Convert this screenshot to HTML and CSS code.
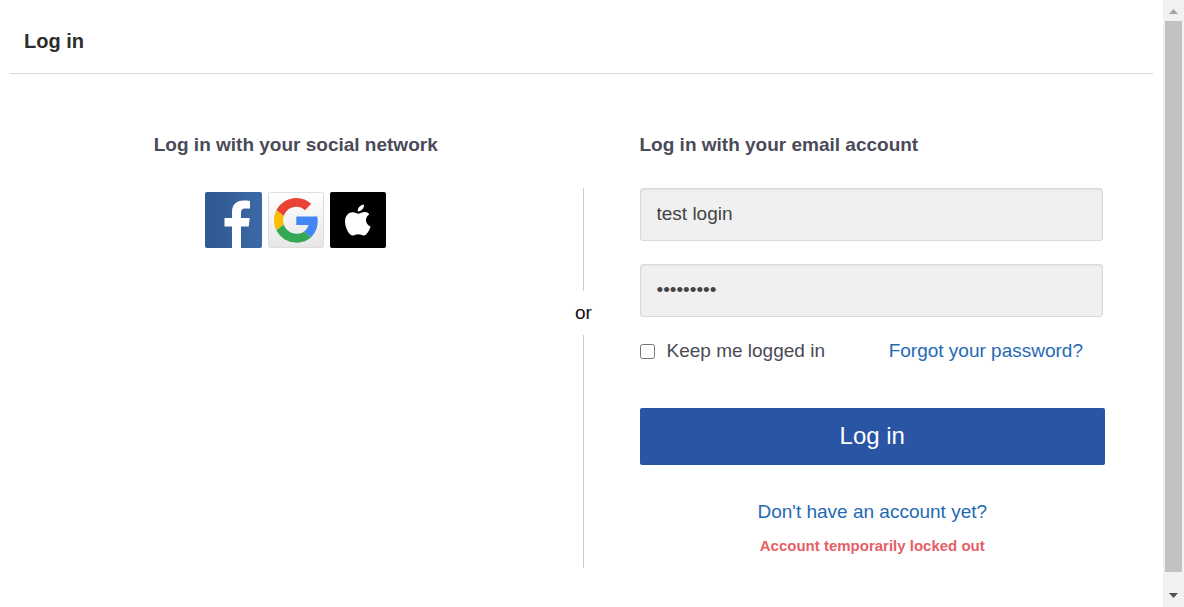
FILE: index.html
```html
<!DOCTYPE html>
<html lang="en">
<head>
<meta charset="utf-8">
<title>Log in</title>
<link rel="stylesheet" href="styles.css">
</head>
<body>
<div class="page">
  <header class="header"><h1 class="title">Log in</h1></header>
  <main class="columns">
    <section class="social">
      <h2 class="heading">Log in with your social network</h2>
      <div class="providers">
        <button class="provider" type="button" aria-label="Facebook">
          <svg width="57" height="56" viewBox="0 0 57 56">
            <defs><linearGradient id="fb" x1="0" x2="1"><stop offset="0" stop-color="#305891"/><stop offset="1" stop-color="#3c69a6"/></linearGradient></defs>
            <rect width="57" height="56" rx="2" fill="url(#fb)"/>
            <path fill="#fff" d="M27 56V34.500h-7.500V26H27v-6c0-7.500 4.500-11.500 11.500-11.500 2.500 0 4.800.1 6.500.400v7.600h-4.500c-3.500 0-4.500 1.700-4.500 4.500v5h8.700l-1 8.500H36V56z"/>
          </svg>
        </button>
        <button class="provider" type="button" aria-label="Google">
          <svg width="56" height="56" viewBox="0 0 56 56">
            <defs><linearGradient id="gg" x1="0" x2="0" y1="0" y2="1"><stop offset="0" stop-color="#fff"/><stop offset="1" stop-color="#e6e6e6"/></linearGradient></defs>
            <rect x=".5" y=".5" width="55" height="55" rx="2" fill="url(#gg)" stroke="#dedede"/>
            <g transform="translate(6 6) scale(.93)">
              <path fill="#ea4335" d="M24 9.500c3.540 0 6.710 1.220 9.210 3.600l6.850-6.850C35.900 2.380 30.470 0 24 0 14.620 0 6.510 5.380 2.560 13.220l7.980 6.190C12.430 13.720 17.740 9.500 24 9.500z"/>
              <path fill="#4285f4" d="M46.980 24.550c0-1.570-.15-3.090-.38-4.550H24v9.020h12.940c-.58 2.960-2.260 5.480-4.780 7.180l7.730 6c4.510-4.180 7.090-10.360 7.090-17.650z"/>
              <path fill="#fbbc05" d="M10.530 28.590c-.48-1.450-.76-2.990-.76-4.590s.27-3.140.76-4.590l-7.980-6.190C.92 16.460 0 20.120 0 24c0 3.880.92 7.540 2.560 10.780l7.970-6.190z"/>
              <path fill="#34a853" d="M24 48c6.480 0 11.930-2.130 15.890-5.810l-7.730-6c-2.150 1.450-4.920 2.300-8.160 2.300-6.260 0-11.570-4.220-13.470-9.910l-7.980 6.190C6.510 42.620 14.620 48 24 48z"/>
            </g>
          </svg>
        </button>
        <button class="provider" type="button" aria-label="Apple">
          <svg width="56" height="56" viewBox="0 0 56 56">
            <rect width="56" height="56" rx="2"/>
            <path fill="#fff" d="M34 12.500c.3 3.800-3 7.100-6.200 7-.5-3.400 2.700-6.700 6.200-7zM39.200 22.400c-4.700 2.900-4.300 9.500 1.400 12-1 3.300-3.800 9.100-7 9.100-2 0-2.800-1.200-5.300-1.200s-3.400 1.200-5.300 1.200c-4 0-8-8.100-8-14 0-6 3.700-9.300 7.700-9.300 2.500 0 4.400 1.500 5.800 1.500 1.500 0 3.700-1.600 6.500-1.600 1.700 0 3.300.8 4.200 2.300z"/>
          </svg>
        </button>
      </div>
    </section>
    <div class="divider"><span class="rule rule-top"></span><span class="or">or</span><span class="rule"></span></div>
    <section class="account">
      <h2 class="heading">Log in with your email account</h2>
      <form class="form">
        <input class="field" type="text" aria-label="Username" value="test login">
        <input class="field" type="password" aria-label="Password" value="password1">
        <div class="options">
          <label class="keep" for="keep"><input class="check" id="keep" type="checkbox">Keep me logged in</label>
          <a class="link" href="#">Forgot your password?</a>
        </div>
        <button class="submit" type="submit">Log in</button>
        <a class="link signup" href="#">Don't have an account yet?</a>
        <p class="error">Account temporarily locked out</p>
      </form>
    </section>
  </main>
</div>
<div class="scrollbar" aria-hidden="true">
  <svg class="arrow" width="21" height="21"><path fill="#a3a3a3" d="M6 14l4.500-5 4.500 5z"/></svg>
  <div class="thumb"></div>
  <svg class="arrow" width="21" height="21"><path fill="#505050" d="M6 7h9l-4.500 5z"/></svg>
</div>
</body>
</html>
```
FILE: styles.css
```css
* { box-sizing: border-box; }
body {
  display: flex;
  min-height: 100vh;
  margin: 0;
  background: #fff;
  font: 19px/24px "Liberation Sans", Arial, sans-serif;
  color: #4a4a55;
}
.page { flex: 1; padding: 0 10px; }
.header { padding: 29px 14px 19px; border-bottom: 1px solid #d9dbdb; }
.title { margin: 0; font-size: 20px; line-height: 25px; color: #2d2d2d; }
.columns { display: grid; grid-template-columns: 1fr 24px 1fr; padding: 59px 0 0 4px; }
.heading { margin: 0; font-size: 19px; line-height: 24px; color: #4a4a58; }
.social { display: flex; flex-direction: column; align-items: center; gap: 35px; padding-left: 6px; }
.providers { display: flex; gap: 6px; }
.provider { display: block; padding: 0; border: 0; background: none; cursor: pointer; }
.provider svg { display: block; }
.divider { display: flex; flex-direction: column; align-items: center; padding-top: 55px; color: #111; }
.rule { flex: 1; width: 1px; background: #ccc; }
.rule-top { flex: none; height: 103px; }
.or { line-height: 44px; }
.account { padding: 0 48px 12px 44px; }
.form { display: flex; flex-direction: column; padding-top: 31px; }
.field {
  height: 53px;
  margin: 0 2px 23px 0;
  padding: 0 16px 2px;
  border: 1px solid #d9d9d9;
  border-radius: 3px;
  background: #f0f0f0;
  box-shadow: inset 0 1px 2px rgba(0, 0, 0, .06);
  font: inherit;
  color: #444;
}
.options { display: flex; justify-content: space-between; margin-top: -1px; padding-right: 22px; }
.keep { display: flex; align-items: center; gap: 12px; }
.check { width: 15px; height: 15px; margin: 0; }
.link { color: #1f69b3; text-decoration: none; }
.submit {
  height: 57px;
  margin: 45px 0 35px;
  padding: 0 0 2px;
  border: 0;
  border-radius: 2px;
  background: #2a54a4;
  font: inherit;
  font-size: 24px;
  color: #fff;
}
.signup { align-self: center; }
.error { margin: 12px 0 0; font-size: 15px; line-height: 20px; font-weight: bold; text-align: center; color: #e65f66; }
.scrollbar { display: flex; flex-direction: column; width: 21px; background: #f1f1f1; }
.arrow { display: block; }
.thumb { flex: 1; margin: 0 2px 14px; background: #c1c1c1; }
```
